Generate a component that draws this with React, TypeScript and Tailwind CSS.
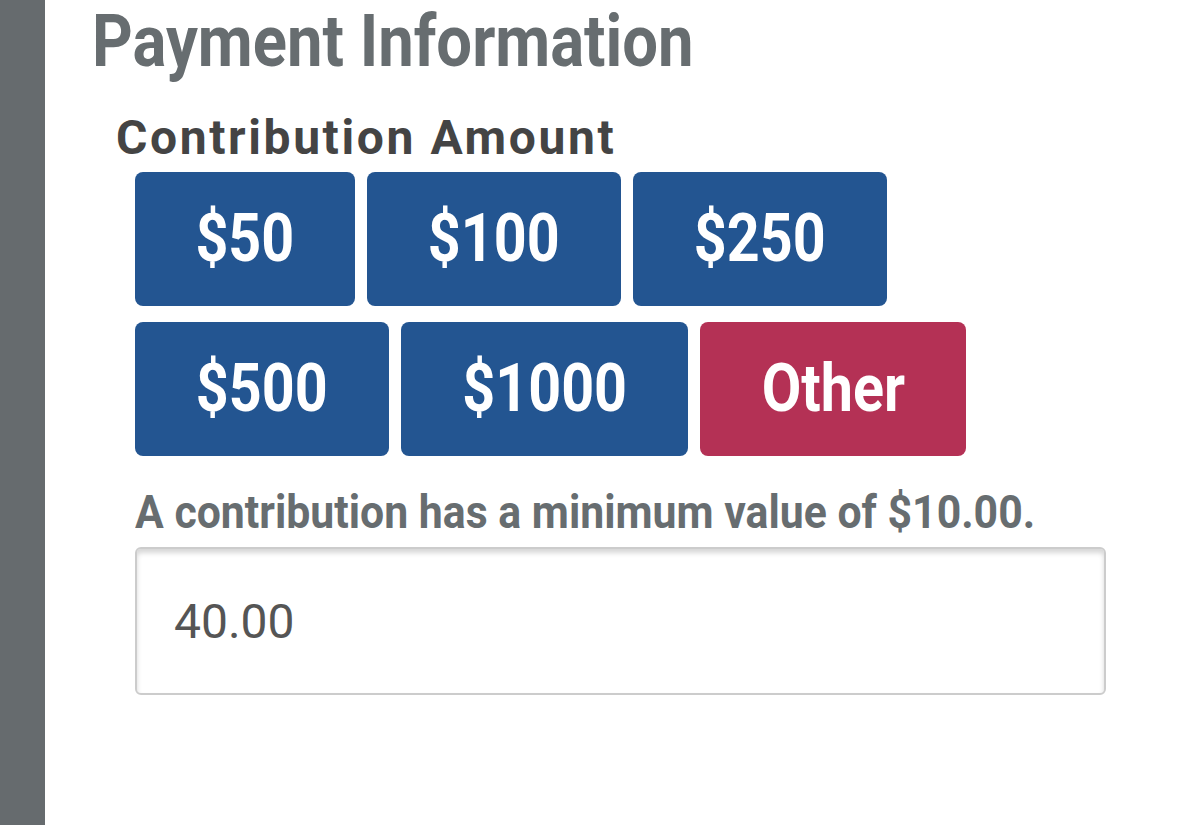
import React from "react";

const amounts = [
  { label: "$50", w: "w-[220px]", red: false },
  { label: "$100", w: "w-[254px]", red: false },
  { label: "$250", w: "w-[254px]", red: false },
  { label: "$500", w: "w-[254px]", red: false },
  { label: "$1000", w: "w-[287px]", red: false },
  { label: "Other", w: "w-[266px]", red: true },
];

const App = () => {
  return (
    <div className="flex min-h-[825px] bg-white font-['Roboto',sans-serif]">
      {/* side rail */}
      <div className="w-[45px] shrink-0 bg-[#666b6e]" />

      <div className="flex-1 pl-[47px]">
        <h1 className="mt-[6px] text-[72px] font-bold leading-none text-[#676d70] whitespace-nowrap">
          <span className="inline-block origin-left scale-x-[0.88]">Payment Information</span>
        </h1>

        <div className="pl-[24px]">
          <h2 className="mt-[36px] text-[48px] font-bold leading-none tracking-[2.6px] text-[#444444] whitespace-nowrap">
            Contribution Amount
          </h2>

          <div className="pl-[19px]">
            <div className="mt-[10px] flex w-[971px] flex-wrap gap-x-[12px] gap-y-[16px]">
              {amounts.map((a) => (
                <button
                  key={a.label}
                  className={`${a.w} flex h-[134px] items-center justify-center rounded-[8px] text-[66px] font-bold leading-none text-white ${
                    a.red ? "bg-[#b43155]" : "bg-[#235591]"
                  }`}
                >
                  <span className="inline-block scale-x-[0.87]">{a.label}</span>
                </button>
              ))}
            </div>

            <p className="mt-[33px] text-[46px] font-bold leading-none text-[#676d70] whitespace-nowrap">
              <span className="inline-block origin-left scale-x-[0.93]">
                A contribution has a minimum value of $10.00.
              </span>
            </p>

            <div className="mt-[12px] flex h-[148px] w-[971px] items-center rounded-[6px] border-2 border-[#cccccc] pl-[37px] shadow-[inset_0_4px_5px_rgba(0,0,0,0.16)]">
              <input
                defaultValue="40.00"
                className="w-full bg-transparent text-[48px] leading-none text-[#555555] outline-none"
              />
            </div>
          </div>
        </div>
      </div>
    </div>
  );
};

export default App;
